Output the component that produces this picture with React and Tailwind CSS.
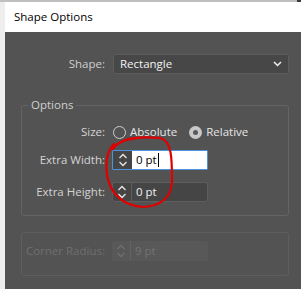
import React from "react";

function Spinner({ color = "#e8e8e8" }) {
  return (
    <svg width="10" height="16" viewBox="0 0 10 16" fill="none">
      <path d="M1.5 6 L5 2.5 L8.5 6" stroke={color} strokeWidth="1.3" />
      <path d="M1.5 10 L5 13.5 L8.5 10" stroke={color} strokeWidth="1.3" />
    </svg>
  );
}

function Label({ children, dim }) {
  return (
    <div
      className={`w-[87px] pr-[4px] text-right text-[11.5px] leading-[20px] ${
        dim ? "text-[#6f6f6f]" : "text-[#d4d4d4]"
      }`}
    >
      {children}
    </div>
  );
}

export default function App() {
  return (
    <div
      className="relative w-[301px] h-[289px] overflow-hidden bg-[#f0f0f0] flex flex-col"
      style={{ fontFamily: '"Open Sans", "Noto Sans", sans-serif' }}
    >
      <div className="h-[2px] flex shrink-0">
        <div className="flex-1 bg-[#bfbfbf]" />
        <div className="w-[4px] bg-[#3a3a3a]" />
      </div>
      <div className="flex flex-1">
        <div className="w-[5px] bg-[#eeeeee]" />
        <div className="flex-1 flex flex-col">
          <div className="h-[30px] bg-white flex items-center pl-[9px] text-[11.5px] text-black">
            Shape Options
          </div>
          <div className="flex-1 bg-[#535353] pl-[16px] pr-[12px]">
            {/* Shape row */}
            <div className="flex items-center mt-[22px]">
              <div className="w-[88px] pr-[4px] text-right text-[11.5px] leading-[20px] text-[#cfcfcf]">
                Shape:
              </div>
              <div className="ml-[4px] w-[176px] h-[20px] rounded-[2px] bg-[#474747] border border-[#5c5c5c] flex items-center justify-between pl-[6px] pr-[6px]">
                <span className="text-[11.5px] text-[#f2f2f2]">Rectangle</span>
                <svg width="9" height="6" viewBox="0 0 9 6">
                  <path d="M1 1 L4.5 4.5 L8 1" stroke="#f0f0f0" strokeWidth="1.5" fill="none" />
                </svg>
              </div>
            </div>

            {/* Options group */}
            <fieldset className="mt-[23px] border border-[#646464] rounded-[3px] pb-[13px]">
              <legend className="ml-[6px] px-[3px] text-[11.5px] leading-[16px] text-[#cfcfcf]">
                Options
              </legend>
              <div className="flex items-center mt-[9px]">
                <Label>Size:</Label>
                <div className="ml-[4px] flex items-center">
                  <div className="w-[13px] h-[13px] rounded-full border border-[#cfcfcf]" />
                  <span className="ml-[4px] text-[11.5px] text-[#e6e6e6]">Absolute</span>
                  <div className="ml-[12px] w-[13px] h-[13px] rounded-full bg-[#c8c8c8] flex items-center justify-center">
                    <div className="w-[5px] h-[5px] rounded-full bg-[#5a5a5a]" />
                  </div>
                  <span className="ml-[4px] text-[11.5px] text-[#e6e6e6]">Relative</span>
                </div>
              </div>
              <div className="flex items-center mt-[8px]">
                <Label>Extra Width:</Label>
                <div className="ml-[3px] w-[96px] h-[20px] flex border border-[#4b93dc] rounded-[1px] overflow-hidden">
                  <div className="w-[19px] bg-[#454545] flex items-center justify-center">
                    <Spinner />
                  </div>
                  <div className="flex-1 bg-white flex items-center pl-[4px] text-[11.5px] text-black">
                    0 pt<span className="ml-[1px] w-[1px] h-[14px] bg-black" />
                  </div>
                </div>
              </div>
              <div className="flex items-center mt-[12px]">
                <Label>Extra Height:</Label>
                <div className="ml-[3px] w-[96px] h-[20px] flex border border-[#5e5e5e] rounded-[2px] bg-[#454545]">
                  <div className="w-[19px] flex items-center justify-center border-r border-[#5e5e5e]">
                    <Spinner />
                  </div>
                  <div className="flex-1 flex items-center pl-[4px] text-[11.5px] text-[#f0f0f0]">
                    0 pt
                  </div>
                </div>
              </div>
            </fieldset>

            {/* Corner radius group */}
            <fieldset className="mt-[16px] border border-[#5e5e5e] rounded-[3px] pt-[8px] pb-[14px]">
              <div className="flex items-center">
                <Label dim>Corner Radius:</Label>
                <div className="ml-[3px] w-[96px] h-[20px] flex bg-[#585858] rounded-[2px]">
                  <div className="w-[19px] flex items-center justify-center border-r border-[#636363]">
                    <Spinner color="#6e6e6e" />
                  </div>
                  <div className="flex-1 flex items-center pl-[4px] text-[11.5px] text-[#737373]">
                    9 pt
                  </div>
                </div>
              </div>
            </fieldset>
          </div>
        </div>
      </div>

      <svg className="absolute left-0 top-0 pointer-events-none" width="301" height="289" viewBox="0 0 301 289" fill="none">
        <path
          d="M113 149 C118 140 135 136 160 138 C172 140 172 160 172 180 C172 198 160 206 143 207 C125 206 110 195 107 175 C105 160 108 150 114 144"
          stroke="#e00000"
          strokeWidth="2.2"
          strokeLinecap="round"
        />
      </svg>
    </div>
  );
}
